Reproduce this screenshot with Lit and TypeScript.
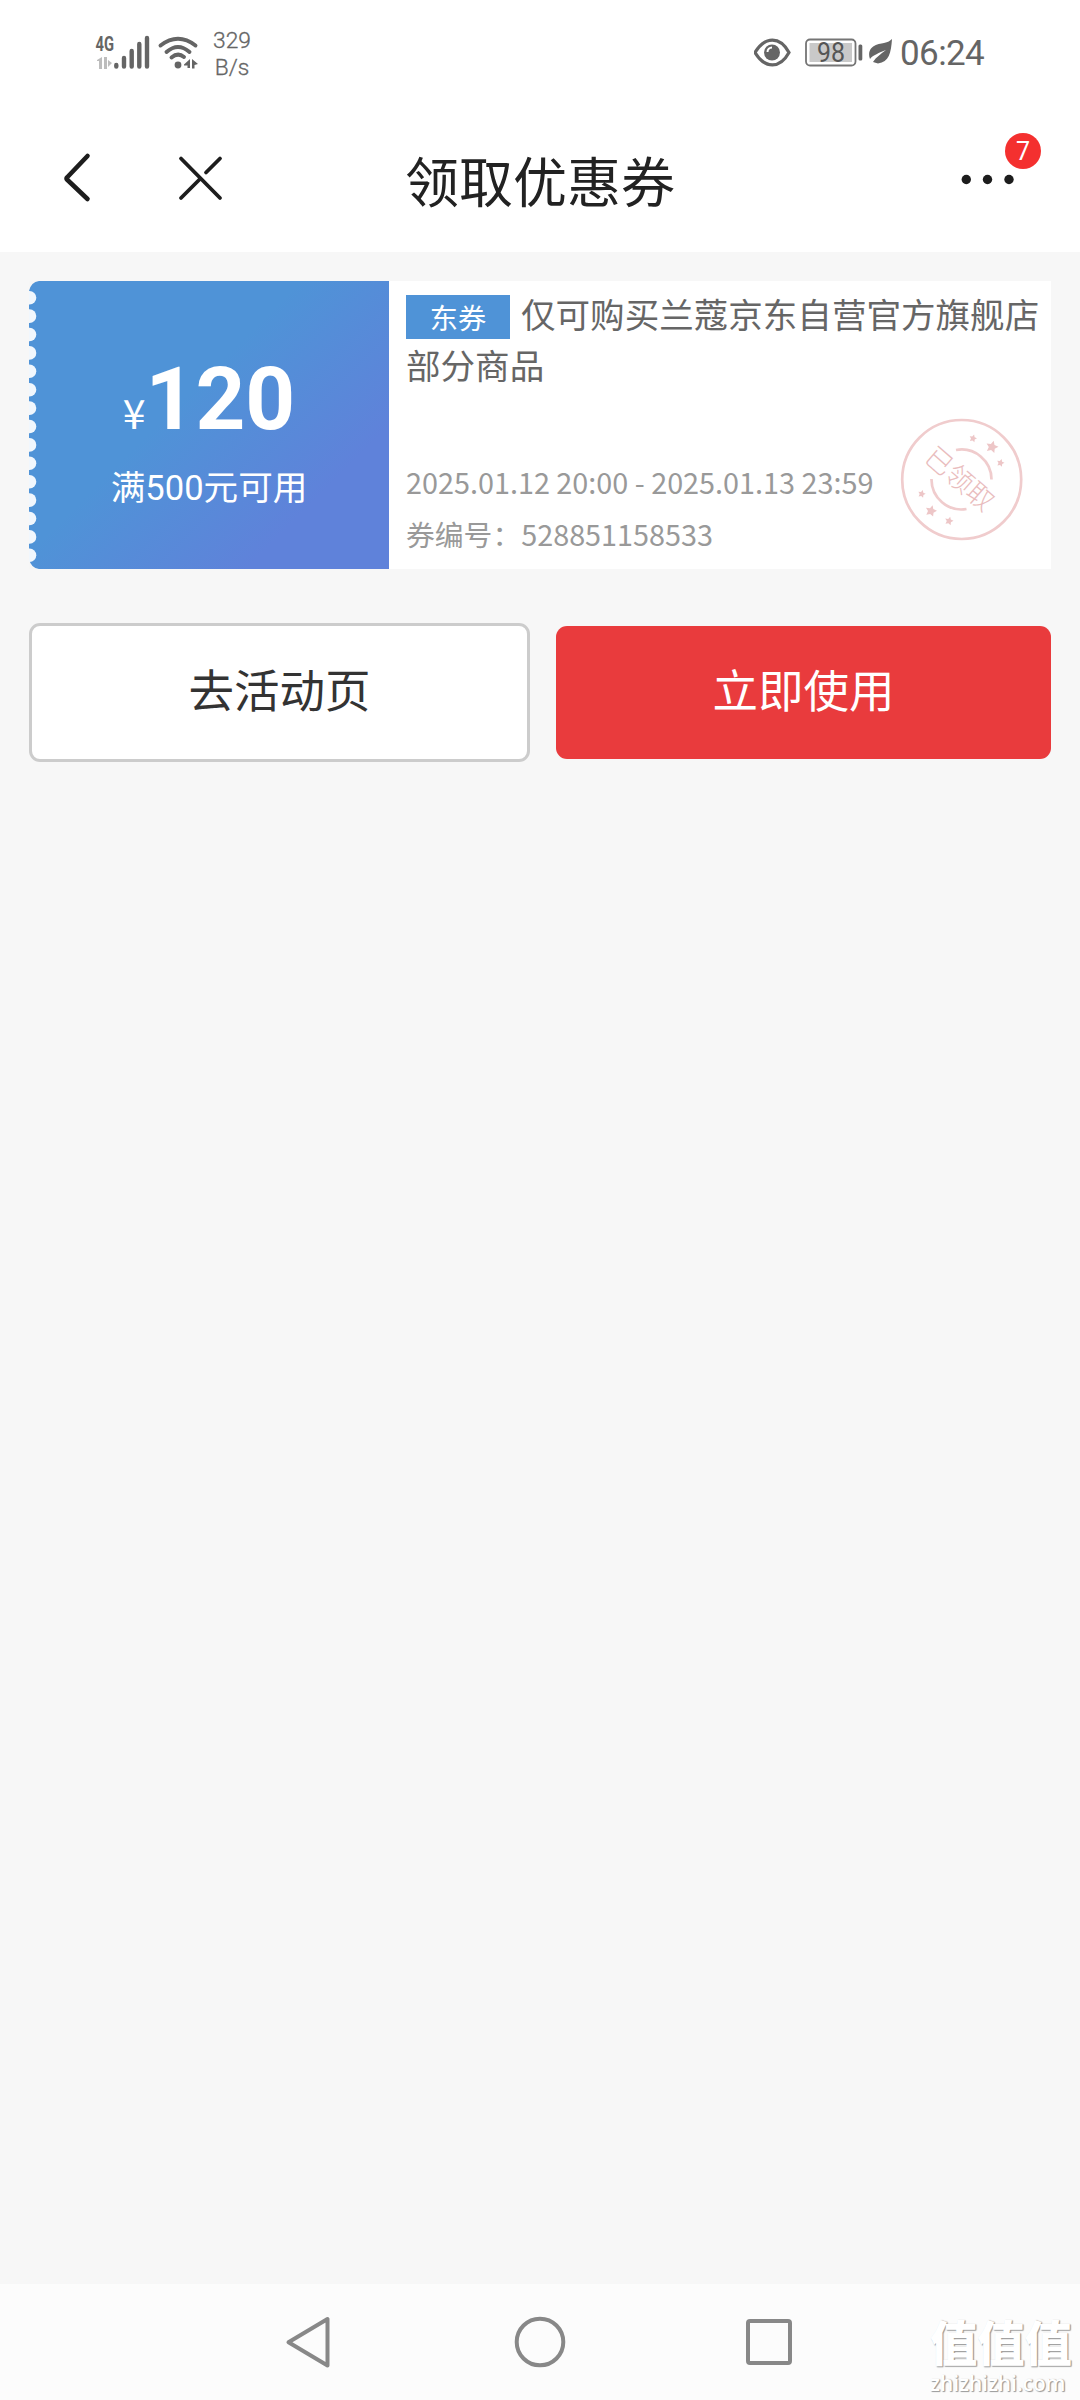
import { LitElement, html, css, svg } from "lit";
import { customElement } from "lit/decorators.js";

const CJK = css`"Noto Sans CJK SC", sans-serif`;

@customElement("status-bar")
class StatusBar extends LitElement {
  static styles = css`
    :host { display: flex; height: 104px; box-sizing: border-box; padding: 15px 96px 0 80px; justify-content: space-between; color: #656565; font-family: Roboto, sans-serif; }
    .side { display: flex; align-items: flex-start; }
    .speed { font-size: 22.8px; line-height: 27px; text-align: center; margin: 12px 0 0 13px; font-weight: 300; -webkit-text-stroke: 0.3px #656565; }
    .clock { font-size: 35px; line-height: 42px; margin: 18px 0 0 0; width: 84px; white-space: nowrap; letter-spacing: -0.6px; }
    svg { display: block; }
    .net { font: bold 21px Roboto, sans-serif; }
    .level { font: 27px Roboto, sans-serif; }
  `;
  render() {
    return html`
      <div class="side">
        <svg width="120" height="75" viewBox="0 0 120 75" fill="#656565">
          <text class="net" x="15.5" y="36" textLength="18.5" lengthAdjust="spacingAndGlyphs">4G</text>
          <g fill="#bdbdbd"><path d="M17 45 22 42V54H19V46H17ZM24 42H27V54H24ZM28 45 32 48 28 52Z"/></g>
          <g stroke="#656565" stroke-width="4.4" stroke-linecap="round">
            <path d="M36.3 50V51.5M44 43V51.5M51.7 36V51.5M59.3 29V51.5M67 23V51.5"/>
          </g>
          <g fill="none" stroke="#656565" stroke-width="3.9" stroke-linecap="round">
            <path d="M80.5 30.5Q98 17 115.500 30.500M86.500 37Q98 27 109.500 37M91.500 42.500Q98 37 104 42"/>
          </g>
          <circle cx="98" cy="50" r="3.400"/>
          <path d="M104 49.500 110 44V53H107.500V50.500H104ZM112 44 118 49 114.500 50V53.500H112Z"/>
        </svg>
        <div class="speed">329<br />B/s</div>
      </div>
      <div class="side">
        <svg width="146" height="75" viewBox="0 0 146 75">
          <path d="M2 37.500C12 21 27 21 36 37.500 27 54 12 54 2 37.500Z" transform="translate(-1 0)" fill="none" stroke="#656565" stroke-width="3.200"/>
          <circle cx="18" cy="37.500" r="8" fill="#656565"/>
          <path d="M13.500 37A4.500 4.500 0 0 1 18 32.500" fill="none" stroke="#fff" stroke-width="2"/>
          <rect x="52" y="24.500" width="49.500" height="26" rx="4" fill="#fff" stroke="#757575" stroke-width="1.800"/>
          <rect x="55.500" y="28" width="42.500" height="19" fill="#c9c9c9"/>
          <text class="level" x="63" y="46.500" textLength="28" lengthAdjust="spacingAndGlyphs" fill="#555">98</text>
          <rect x="104.500" y="29.500" width="3.800" height="16" rx="1.500" fill="#656565"/>
          <path d="M138 24C137 38 135 47 124 48.500L119 47C122 42 127 39 132 35 125 38 119 40 116 44 112 31 124 29 130 28 134 27 136 26 138 24Z" fill="#656565"/>
        </svg>
        <div class="clock">06:24</div>
      </div>
    `;
  }
}

@customElement("nav-header")
class NavHeader extends LitElement {
  static styles = css`
    :host { display: grid; grid-template-columns: 1fr auto 1fr; align-items: center; height: 148px; }
    .left { display: flex; padding: 0 0 4px 60px; gap: 81px; align-items: center; }
    .title { font: 54px/80px ${CJK}; color: #222; padding-top: 4px; }
    .right { display: flex; justify-content: flex-end; padding: 0 36px 3px 0; }
    svg { display: block; }
    .count { font: 25px Roboto, sans-serif; }
  `;
  render() {
    return html`
      <div class="left">
        <svg width="36" height="56" viewBox="0 0 36 56" fill="none" stroke="#1d1d1d" stroke-width="4.600" stroke-linecap="round" stroke-linejoin="round"><path d="M27.500 8 7 29.500Q6 30.500 7 31.500L27.500 51"/></svg>
        <svg width="48" height="56" viewBox="0 0 48 56" fill="none" stroke="#1d1d1d" stroke-width="3.800" stroke-linecap="round"><path d="M4 10.500 43 50M43 10.500 29 24.500M23.500 30.500 4 50"/></svg>
      </div>
      <div class="title">领取优惠券</div>
      <div class="right">
        <svg width="90" height="100" viewBox="0 0 90 100">
          <g fill="#1d1d1d"><circle cx="12.300" cy="52.500" r="4.700"/><circle cx="33.500" cy="52.500" r="4.700"/><circle cx="55" cy="52.500" r="4.700"/></g>
          <circle cx="69" cy="24" r="18" fill="#f4302f"/>
          <text class="count" x="69" y="33" text-anchor="middle" fill="#fff">7</text>
        </svg>
      </div>
    `;
  }
}

@customElement("coupon-card")
class CouponCard extends LitElement {
  static styles = css`
    :host { display: flex; position: relative; height: 288px; background: #fff; font-family: ${CJK}; }
    .value { width: 360px; flex: none; position: relative; box-sizing: border-box; padding-top: 70px; color: #fff; text-align: center; background: linear-gradient(135deg, #4f93d7 0%, #4f93d7 42%, #5f82da 78%, #5f82da 100%); }
    .edge { position: absolute; left: 0; top: 0; display: block; }
    .amount { font: bold 87px/96px Roboto, sans-serif; height: 96px; display: flex; justify-content: center; align-items: baseline; }
    .yen { font: 41px/40px ${CJK}; }
    .limit { font: 34.600px/48px Roboto, ${CJK}; margin-top: 17px; }
    .info { flex: 1; box-sizing: border-box; padding: 7px 0 0 17px; }
    .desc { font-size: 34.560px; line-height: 51px; color: #666; white-space: nowrap; }
    .tag { display: inline-block; vertical-align: top; width: 104px; height: 44px; margin: 7px 11px 0 0; line-height: 43px; font-size: 28.200px; color: #fff; background: #4f93d7; text-align: center; }
    .meta { font-size: 28.800px; line-height: 52px; color: #999; white-space: nowrap; }
    .first { margin-top: 66px; }
    .stamp { position: absolute; left: 871px; top: 137px; display: block; }
    .got { font: 300 27px ${CJK}; }
  `;
  star(x: number, y: number, r: number) {
    const pts = Array.from({ length: 10 }, (_, i) => {
      const a = (i * Math.PI) / 5 - 1.3;
      const q = i % 2 ? r * 0.5 : r;
      return `${(x + q * Math.cos(a)).toFixed(1)},${(y + q * Math.sin(a)).toFixed(1)}`;
    }).join(" ");
    return svg`<polygon points=${pts} fill="#edc6c7"/>`;
  }
  render() {
    return html`
      <div class="value">
        <svg class="edge" width="14" height="288" viewBox="0 0 14 288">
          <path d="M0 0H10Q2 1 0 10ZM0 288H10Q2 287 0 278Z" fill="#f6f6f6"/>
          ${Array.from({ length: 15 }, (_, i) => svg`<circle cx="0.500" cy=${16.7 + i * 18.4} r="6.800" fill="#f1f7fd"/>`)}
        </svg>
        <div class="amount"><span class="yen">¥</span>120</div>
        <div class="limit">满500元可用</div>
      </div>
      <div class="info">
        <div class="desc"><span class="tag">东券</span>仅可购买兰蔻京东自营官方旗舰店<br />部分商品</div>
        <div class="meta first">2025.01.12 20:00 - 2025.01.13 23:59</div>
        <div class="meta">券编号：528851158533</div>
      </div>
      <svg class="stamp" width="124" height="124" viewBox="0 0 124 124" fill="none" stroke="#f0cccd" stroke-width="2.700">
        <circle cx="61.700" cy="61.500" r="59.500"/>
        <path d="M56 32A30 30 0 0 1 91.500 61.500M31.500 61A30 30 0 0 0 66.500 91"/>
        <g stroke="none">
          ${this.star(73, 20.5, 4)}${this.star(92, 29, 6.5)}${this.star(100.500, 45, 4)}
          ${this.star(21.700, 76, 4)}${this.star(31, 93, 6)}${this.star(49, 103, 4.500)}
          <text class="got" transform="rotate(41 60 60.500)" x="60" y="70.500" text-anchor="middle" fill="#e9bcbd">已领取</text>
        </g>
      </svg>
    `;
  }
}

@customElement("system-nav")
class SystemNav extends LitElement {
  static styles = css`
    :host { display: block; position: relative; height: 116px; background: #fcfcfc; }
    .keys { display: flex; justify-content: center; gap: 169px; padding-top: 28px; }
    svg { display: block; }
    .mark { position: absolute; right: 8px; bottom: 5px; width: 142px; color: #fff; text-shadow: 1px 1px 1px #999, 1px 0 1px #b5b5b5; white-space: nowrap; }
    .big { font: 900 47.300px/50px ${CJK}; }
    .url { font: 600 20.800px/24px "Open Sans", sans-serif; margin-top: 5px; }
  `;
  render() {
    return html`
      <div class="keys">
        <svg width="60" height="60" viewBox="0 0 60 60" fill="none" stroke="#888" stroke-width="4" stroke-linejoin="round"><path d="M46.500 7V53.500L7.500 30.200Z"/></svg>
        <svg width="60" height="60" viewBox="0 0 60 60" fill="none" stroke="#888" stroke-width="4"><circle cx="30" cy="30" r="23.300"/></svg>
        <svg width="60" height="60" viewBox="0 0 60 60" fill="none" stroke="#888" stroke-width="4"><rect x="9" y="9" width="42" height="42" rx="2"/></svg>
      </div>
      <div class="mark"><div class="big">值值值</div><div class="url">zhizhizhi.com</div></div>
    `;
  }
}

@customElement("app-root")
class AppRoot extends LitElement {
  static styles = css`
    :host { display: flex; flex-direction: column; width: 1080px; height: 2400px; overflow: hidden; background: #f7f7f7; }
    .top { background: #fff; height: 252px; flex: none; }
    .main { flex: 1; padding: 29px 29px 0; }
    .actions { display: flex; gap: 26px; margin-top: 54px; align-items: center; }
    .btn { box-sizing: border-box; height: 133px; flex: 1; border: 0; border-radius: 11px; padding: 0 0 10px; font: 45.500px/60px ${CJK}; color: #fff; background: #e93b3d; }
    .plain { flex: none; width: 501px; height: 139px; border: 3px solid #ccc; background: #fff; color: #333; }
  `;
  render() {
    return html`
      <div class="top"><status-bar></status-bar><nav-header></nav-header></div>
      <div class="main">
        <coupon-card></coupon-card>
        <div class="actions">
          <button class="btn plain">去活动页</button>
          <button class="btn">立即使用</button>
        </div>
      </div>
      <system-nav></system-nav>
    `;
  }
}
